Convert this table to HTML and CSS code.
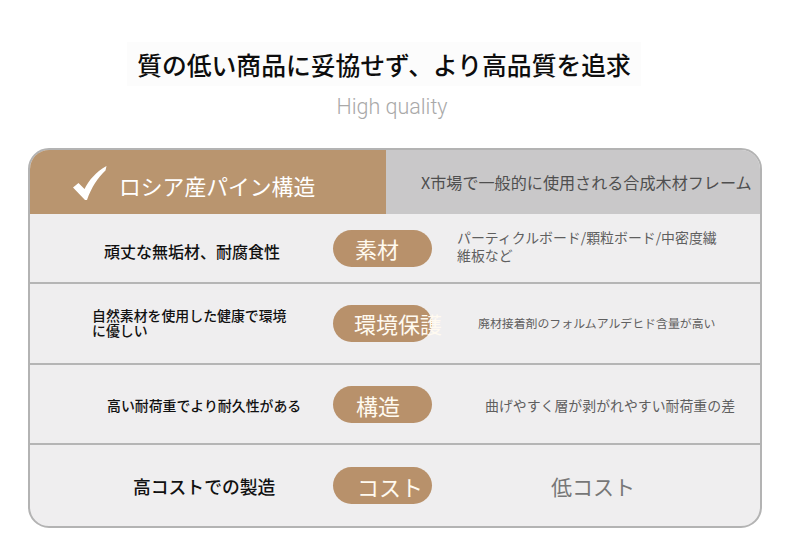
FILE: index.html
```html
<!DOCTYPE html>
<html lang="ja">
<head>
<meta charset="utf-8">
<title>High quality</title>
<link rel="stylesheet" href="styles.css">
</head>
<body>
<div class="page">
  <div class="heading">
    <h1 class="title">質の低い商品に妥協せず、より高品質を追求</h1>
  </div>
  <p class="subtitle">High quality</p>

  <div class="card">
    <div class="head">
      <div class="head-ours">
        <svg class="check" width="34" height="34" viewBox="0 0 34 34" aria-hidden="true">
          <path d="M0 21.5 L5.5 17 L11.5 23 C16 14 23 6 33.5 0 L32.5 4.5 C25 11.5 18.5 21 14 34 L12 34 Z" fill="#ffffff"/>
        </svg>
        <span class="head-ours-text">ロシア産パイン構造</span>
      </div>
      <div class="head-other">X市場で一般的に使用される合成木材フレーム</div>
    </div>

    <div class="row row-1">
      <div class="cell-left"><span class="left-text lt-1">頑丈な無垢材、耐腐食性</span></div>
      <div class="cell-badge"><span class="badge">素材</span></div>
      <div class="cell-right"><span class="right-text rt-1">パーティクルボード/顆粒ボード/中密度繊<br>維板など</span></div>
    </div>

    <div class="row row-2">
      <div class="cell-left"><span class="left-text lt-2">自然素材を使用した健康で環境<br>に優しい</span></div>
      <div class="cell-badge"><span class="badge">環境保護</span></div>
      <div class="cell-right"><span class="right-text rt-2">廃材接着剤のフォルムアルデヒド含量が高い</span></div>
    </div>

    <div class="row row-3">
      <div class="cell-left"><span class="left-text lt-3">高い耐荷重でより耐久性がある</span></div>
      <div class="cell-badge"><span class="badge">構造</span></div>
      <div class="cell-right"><span class="right-text rt-3">曲げやすく層が剥がれやすい耐荷重の差</span></div>
    </div>

    <div class="row row-4">
      <div class="cell-left"><span class="left-text lt-4">高コストでの製造</span></div>
      <div class="cell-badge"><span class="badge">コスト</span></div>
      <div class="cell-right"><span class="right-text rt-4">低コスト</span></div>
    </div>
  </div>
</div>
</body>
</html>
```

FILE: styles.css
```css
* { box-sizing: border-box; }

html, body {
  margin: 0;
  padding: 0;
  background: #ffffff;
}

body {
  font-family: "Noto Sans CJK JP", "Noto Sans", sans-serif;
  color: #111;
}

.page {
  width: 790px;
  height: 544px;
  padding-top: 42px;
  display: flex;
  flex-direction: column;
  align-items: center;
}

.heading {
  background: #fcfcfc;
  padding: 4px 10px;
  margin-left: -22px;
}

.title {
  margin: 0;
  font-size: 24.8px;
  line-height: 36px;
  font-weight: 500;
  color: #0d0d0d;
  letter-spacing: 0;
  white-space: nowrap;
}

.subtitle {
  margin: 8px 0 0 0;
  font-family: Roboto, "Noto Sans", sans-serif;
  font-weight: 300;
  font-size: 21.5px;
  line-height: 26px;
  color: #a9a9a9;
  margin-left: -6px;
}

.card {
  margin-top: 28px;
  width: 734px;
  height: 380px;
  border: 2px solid #b3b3b3;
  border-radius: 21px;
  overflow: hidden;
  background: #efeeef;
  display: flex;
  flex-direction: column;
  align-self: flex-start;
  margin-left: 28px;
}

.head {
  height: 64px;
  display: flex;
  flex-shrink: 0;
}

.head-ours {
  width: 356px;
  background: #b9956f;
  display: flex;
  align-items: center;
  padding-left: 43px;
  gap: 12px;
}

.check {
  display: block;
  margin-top: 2px;
}

.head-ours-text {
  color: #ffffff;
  font-size: 21.8px;
  line-height: 28px;
  margin-top: 7px;
}

.head-other {
  flex: 1;
  background: #c9c8c9;
  display: flex;
  align-items: center;
  padding-left: 35px;
  font-size: 16.1px;
  color: #4f4f4f;
  white-space: nowrap;
  padding-bottom: 1px;
}

.row {
  display: grid;
  grid-template-columns: 303px 99px 1fr;
  align-items: center;
  border-top: 2px solid #b5b5b5;
}

.row-1 { height: 68px; border-top: none; }
.row-2 { height: 81px; }
.row-3 { height: 80px; }
.row-4 { height: 83px; }

.cell-left {
  display: flex;
  align-items: center;
}

.left-text {
  color: #111;
  font-weight: 500;
  white-space: nowrap;
}

.lt-1 { font-size: 16px; line-height: 20px; padding-left: 74px; margin-top: 6px; }
.lt-2 { font-size: 13.9px; line-height: 15px; padding-left: 62px; margin-top: -2px; }
.lt-3 { font-size: 13.9px; line-height: 20px; padding-left: 77px; margin-top: 2px; }
.lt-4 { font-size: 17.8px; line-height: 22px; padding-left: 103px; margin-top: 0; }

.cell-badge {
  display: flex;
  align-items: center;
}

.badge {
  display: flex;
  align-items: center;
  width: 99px;
  height: 37px;
  border-radius: 19px;
  background: #b8916b;
  color: #fffaf0;
  font-size: 22px;
  line-height: 28px;
  padding-left: 22px;
  white-space: nowrap;
  overflow: visible;
}

.row-2 .badge { margin-top: -1px; padding-left: 21px; }
.row-3 .badge { margin-top: 1px; padding-left: 23px; }
.row-4 .badge { margin-top: 0; padding-left: 24px; }

.cell-right {
  display: flex;
  align-items: center;
}

.right-text {
  color: #5f5f5f;
  white-space: nowrap;
}

.rt-1 { font-size: 13.9px; line-height: 17.5px; padding-left: 25px; margin-top: -3px; }
.rt-2 { font-size: 11.9px; line-height: 16px; padding-left: 46px; margin-top: -1px; }
.rt-3 { font-size: 13.9px; line-height: 20px; padding-left: 53px; margin-top: 2px; }
.rt-4 { font-size: 21px; line-height: 26px; padding-left: 119px; color: #777; margin-top: 0; }
```
